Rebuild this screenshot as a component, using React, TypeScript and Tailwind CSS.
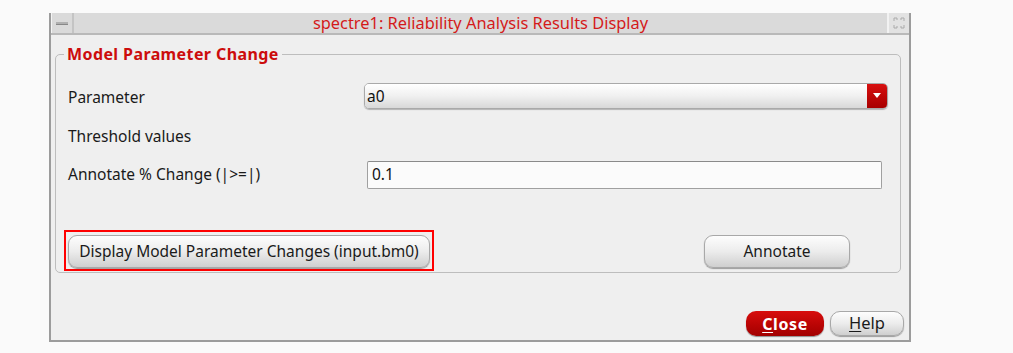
import React from "react";

const font = { fontFamily: '"Noto Sans", "Open Sans", "DejaVu Sans", sans-serif' };

function GrayButton({ children, className }: { children: React.ReactNode; className: string }) {
  return (
    <div
      className={
        "flex items-center justify-center border border-[#a8a8a8] bg-gradient-to-b from-[#fdfdfd] via-[#ececec] to-[#cfcfcf] shadow-[0_1px_1px_rgba(0,0,0,0.35)] text-[15.5px] text-[#1a1a1a] " +
        className
      }
    >
      {children}
    </div>
  );
}

export default function App() {
  return (
    <div className="w-[1013px] h-[353px] bg-[#fafafa] pt-[13px] pl-[49px]" style={font}>
      <div className="w-[862px] h-[329px] bg-[#efefef] border-l-2 border-r-2 border-b-2 border-[#9c9c9c] flex flex-col">
        {/* title bar */}
        <div className="h-[22px] flex bg-[#dadada] border-b-2 border-[#b9b9b9]">
          <div className="w-[23px] flex items-center justify-center border-r-2 border-[#c4c4c4] border-l border-l-[#f4f4f4]">
            <div className="w-[12px] h-[3px] bg-[#b0b0b0] border-b border-[#888]" />
          </div>
          <div className="flex-1 flex items-center justify-center text-[16.4px] text-[#d41a1a] leading-none pt-[1px]">
            spectre1: Reliability Analysis Results Display
          </div>
          <div className="w-[22px] flex items-center justify-center border-l-2 border-[#f2f2f2] bg-[#e2e2e2]">
            <svg width="14" height="14" viewBox="0 0 14 14" fill="none" stroke="#aaa" strokeWidth="1">
              <path d="M2 2 L5 2 L5 4 M2 2 L2 5 M12 2 L9 2 L9 4 M12 2 L12 5 M2 12 L5 12 L5 10 M2 12 L2 9 M12 12 L9 12 L9 10 M12 12 L12 9" />
            </svg>
          </div>
        </div>

        {/* group */}
        <div className="relative mt-[19px] ml-[4px] w-[846px] h-[219px] border border-[#bdbdbd] rounded-[5px] pl-[12px]">
          <div className="absolute left-[8px] top-[-11px] px-[3px] bg-[#efefef] text-[16px] font-bold text-[#cc0c0c] leading-[20px] tracking-[0.4px]">
            Model Parameter Change
          </div>

          {/* Parameter row */}
          <div className="mt-[28px] h-[26px] flex items-center">
            <div className="w-[296px] text-[15.5px] text-[#1a1a1a] pt-[4px]">Parameter</div>
            <div className="w-[524px] h-[26px] flex rounded-[5px] border border-[#a9a9a9] overflow-hidden shadow-[0_1px_1px_rgba(0,0,0,0.25)]">
              <div className="flex-1 flex items-center pl-[2px] pt-[1px] text-[15.5px] text-[#111] bg-gradient-to-b from-[#ffffff] via-[#f0f0f0] to-[#d8d8d8]">
                a0
              </div>
              <div className="w-[20px] flex items-center justify-center bg-gradient-to-b from-[#d81010] to-[#a80000]">
                <svg width="8" height="6" viewBox="0 0 8 6">
                  <path d="M0 0 L8 0 L4 5 Z" fill="#ffffff" />
                </svg>
              </div>
            </div>
          </div>

          {/* Threshold */}
          <div className="mt-[18px] h-[20px] flex items-center text-[15.5px] text-[#1a1a1a]">Threshold values</div>

          {/* Annotate % Change */}
          <div className="mt-[14px] h-[28px] flex items-center">
            <div className="w-[299px] text-[15.5px] text-[#1a1a1a]">Annotate % Change (|&gt;=|)</div>
            <div className="w-[515px] h-[28px] flex items-center pl-[4px] bg-[#fbfbfb] border border-[#a0a0a0] border-t-[#8a8a8a] rounded-[2px] text-[15.5px] text-[#111]">
              0.1
            </div>
          </div>

          {/* buttons row */}
          <div className="mt-[41px] h-[41px] flex items-start ml-[-4px]">
            <div className="w-[370px] h-[41px] border-2 border-[#ff0000] pl-[2px] pt-[3px]">
              <GrayButton className="w-[362px] h-[33px] rounded-[9px]">Display Model Parameter Changes (input.bm0)</GrayButton>
            </div>
            <div className="ml-[270px] pt-[5px]">
              <GrayButton className="w-[146px] h-[33px] rounded-[9px]">Annotate</GrayButton>
            </div>
          </div>
        </div>

        {/* bottom buttons */}
        <div className="mt-[38px] flex justify-end pr-[5px] gap-[6px]">
          <div className="w-[78px] h-[25px] flex items-center justify-center rounded-[10px] bg-gradient-to-b from-[#d80d0d] to-[#a20000] shadow-[0_1px_1px_rgba(0,0,0,0.4)] text-[16px] font-bold text-white tracking-[0.6px]">
            <span className="underline underline-offset-2">C</span>lose
          </div>
          <GrayButton className="w-[74px] h-[25px] rounded-[10px] text-[16.5px]">
            <span className="underline underline-offset-2">H</span>elp
          </GrayButton>
        </div>
      </div>
    </div>
  );
}
